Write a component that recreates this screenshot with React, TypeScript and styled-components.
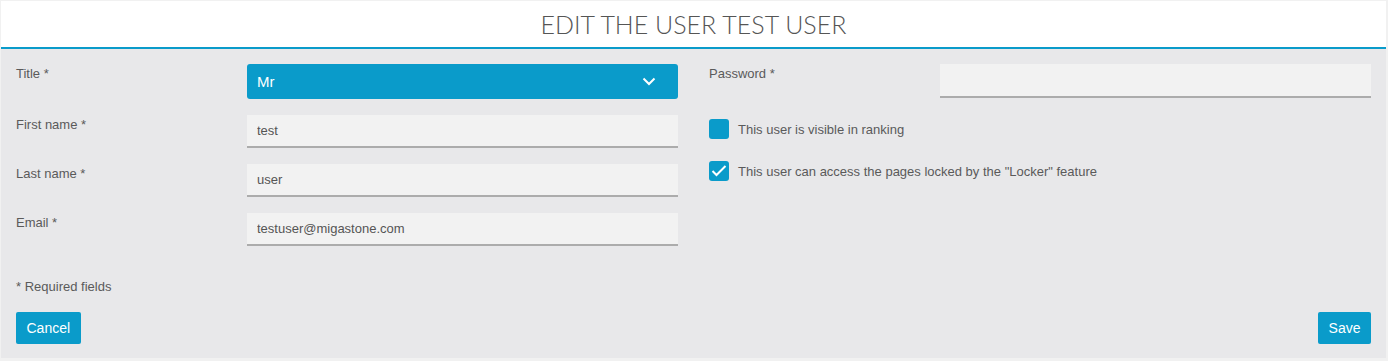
import React, { useState } from 'react'
import styled, { createGlobalStyle } from 'styled-components'

const GlobalStyle = createGlobalStyle`
  html, body {
    margin: 0;
    padding: 0;
    background: #f1f1f1;
    font-family: 'Liberation Sans', Arial, sans-serif;
  }
`

const blue = '#0a9bca'

const Panel = styled.div`
  margin: 1px 2px 0 1px;
  background: #e8e8ea;
`

const Header = styled.div`
  height: 46px;
  background: #fff;
  border-bottom: 2px solid ${blue};
  display: flex;
  align-items: center;
  justify-content: center;
`

const Title = styled.h1`
  margin: 0;
  font-family: Lato, 'Liberation Sans', sans-serif;
  font-weight: 300;
  font-size: 25px;
  letter-spacing: 0;
  color: #555;
`

const Body = styled.div`
  padding: 15px 15px 14px;
`

const Columns = styled.div`
  display: grid;
  grid-template-columns: 1fr 1fr;
  column-gap: 31px;
`

const Column = styled.div`
  display: flex;
  flex-direction: column;
`

const Field = styled.div`
  display: grid;
  grid-template-columns: 231px 1fr;
  margin-bottom: 16px;
`

const Label = styled.label`
  font-size: 13px;
  line-height: 20px;
  color: #5a5a5a;
`

const Select = styled.div`
  height: 35px;
  border-radius: 3px;
  background: ${blue};
  color: #fff;
  font-size: 15px;
  display: flex;
  align-items: center;
  justify-content: space-between;
  padding: 0 22px 0 10px;
  cursor: pointer;
`

const Input = styled.input<{ $tall?: boolean }>`
  box-sizing: border-box;
  width: 100%;
  height: ${(p) => (p.$tall ? 34 : 33)}px;
  border: none;
  border-bottom: 2px solid #acacac;
  background: #f2f2f2;
  padding: 0 10px;
  font-family: 'Liberation Sans', Arial, sans-serif;
  font-size: 13px;
  color: #555;
  outline: none;
`

const CheckList = styled.div`
  display: flex;
  flex-direction: column;
  gap: 22px;
  margin-top: 5px;
`

const CheckRow = styled.label`
  display: flex;
  align-items: center;
  gap: 9px;
  font-size: 13px;
  color: #5a5a5a;
  cursor: pointer;
`

const Box = styled.span`
  width: 20px;
  height: 20px;
  border-radius: 3px;
  background: ${blue};
  display: flex;
  align-items: center;
  justify-content: center;
  flex-shrink: 0;
`

const Required = styled.div`
  margin-top: 15px;
  font-size: 13px;
  line-height: 20px;
  color: #5a5a5a;
`

const Footer = styled.div`
  display: flex;
  justify-content: space-between;
  margin-top: 15px;
`

const Button = styled.button`
  height: 32px;
  padding: 0 10.5px;
  border: none;
  border-radius: 2px;
  background: ${blue};
  color: #fff;
  font-family: 'Liberation Sans', Arial, sans-serif;
  font-size: 14px;
  cursor: pointer;
`

const Chevron = () => (
  <svg width="14" height="9" viewBox="0 0 14 9">
    <polyline points="1.5,1.5 7,7 12.5,1.5" fill="none" stroke="#fff" strokeWidth="2" />
  </svg>
)

const Check = () => (
  <svg width="20" height="20" viewBox="0 0 20 20">
    <polyline points="3.5,10 7.5,14 16.5,5" fill="none" stroke="#fff" strokeWidth="2" />
  </svg>
)

const Checkbox: React.FC<{ checked: boolean; onToggle: () => void; children: React.ReactNode }> = ({
  checked,
  onToggle,
  children,
}) => (
  <CheckRow onClick={onToggle}>
    <Box>{checked && <Check />}</Box>
    {children}
  </CheckRow>
)

const App: React.FC = () => {
  const [visible, setVisible] = useState(false)
  const [locker, setLocker] = useState(true)

  return (
    <>
      <GlobalStyle />
      <Panel>
        <Header>
          <Title>EDIT THE USER TEST USER</Title>
        </Header>
        <Body>
          <Columns>
            <Column>
              <Field>
                <Label>Title *</Label>
                <Select>
                  Mr
                  <Chevron />
                </Select>
              </Field>
              <Field>
                <Label>First name *</Label>
                <Input defaultValue="test" />
              </Field>
              <Field>
                <Label>Last name *</Label>
                <Input defaultValue="user" />
              </Field>
              <Field>
                <Label>Email *</Label>
                <Input defaultValue="testuser@migastone.com" />
              </Field>
            </Column>
            <Column>
              <Field>
                <Label>Password *</Label>
                <Input type="password" $tall />
              </Field>
              <CheckList>
                <Checkbox checked={visible} onToggle={() => setVisible(!visible)}>
                  This user is visible in ranking
                </Checkbox>
                <Checkbox checked={locker} onToggle={() => setLocker(!locker)}>
                  This user can access the pages locked by the "Locker" feature
                </Checkbox>
              </CheckList>
            </Column>
          </Columns>
          <Required>* Required fields</Required>
          <Footer>
            <Button>Cancel</Button>
            <Button>Save</Button>
          </Footer>
        </Body>
      </Panel>
    </>
  )
}

export default App
